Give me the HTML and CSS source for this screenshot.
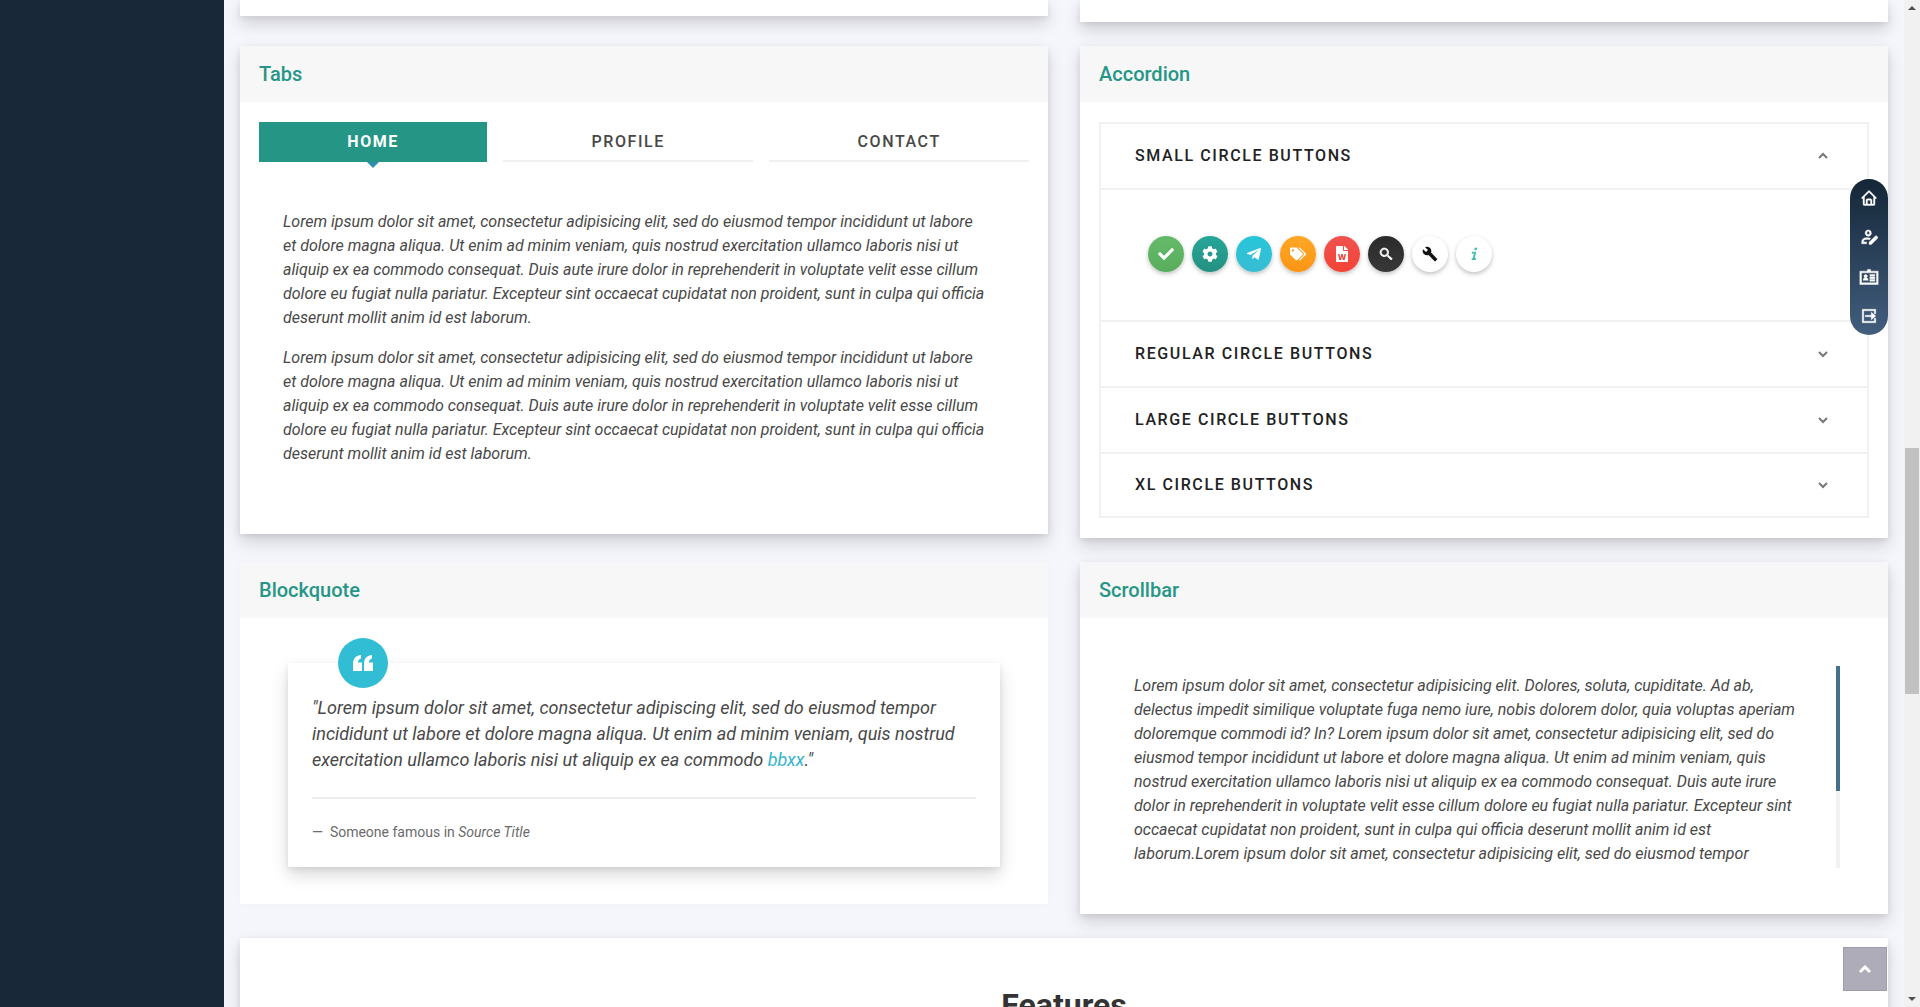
FILE: index.html
```html
<!DOCTYPE html>
<html lang="en">
<head>
<meta charset="utf-8">
<title>Components</title>
<link rel="stylesheet" href="styles.css">
</head>
<body>
<div class="app">
  <aside class="sidebar"></aside>
  <main class="content">
    <div class="row">
      <section class="card tail"></section>
      <section class="card tail tail-long"></section>
    </div>

    <div class="row">
      <section class="card">
        <h2 class="card-header">Tabs</h2>
        <div class="card-body tabs-body">
          <div class="tabs" role="tablist">
            <button class="tab active" role="tab" aria-selected="true">HOME</button>
            <button class="tab" role="tab" aria-selected="false">PROFILE</button>
            <button class="tab" role="tab" aria-selected="false">CONTACT</button>
          </div>
          <div class="tab-panel" role="tabpanel">
            <p>Lorem ipsum dolor sit amet, consectetur adipisicing elit, sed do eiusmod tempor incididunt ut labore et dolore magna aliqua. Ut enim ad minim veniam, quis nostrud exercitation ullamco laboris nisi ut aliquip ex ea commodo consequat. Duis aute irure dolor in reprehenderit in voluptate velit esse cillum dolore eu fugiat nulla pariatur. Excepteur sint occaecat cupidatat non proident, sunt in culpa qui officia deserunt mollit anim id est laborum.</p>
            <p>Lorem ipsum dolor sit amet, consectetur adipisicing elit, sed do eiusmod tempor incididunt ut labore et dolore magna aliqua. Ut enim ad minim veniam, quis nostrud exercitation ullamco laboris nisi ut aliquip ex ea commodo consequat. Duis aute irure dolor in reprehenderit in voluptate velit esse cillum dolore eu fugiat nulla pariatur. Excepteur sint occaecat cupidatat non proident, sunt in culpa qui officia deserunt mollit anim id est laborum.</p>
          </div>
        </div>
      </section>

      <section class="card">
        <h2 class="card-header">Accordion</h2>
        <div class="card-body">
          <div class="accordion">
            <button class="accordion-toggle" aria-expanded="true">SMALL CIRCLE BUTTONS
              <svg class="chevron" viewBox="0 0 12 8"><path d="M2 6l4-4 4 4"/></svg></button>
            <div class="accordion-panel">
              <button class="circle green" aria-label="Confirm"><svg viewBox="0 0 512 512"><path d="M173.898 439.404l-166.4-166.4c-9.997-9.997-9.997-26.206 0-36.204l36.203-36.204c9.997-9.998 26.207-9.998 36.204 0L192 312.69 432.095 72.596c9.997-9.997 26.207-9.997 36.204 0l36.203 36.204c9.997 9.997 9.997 26.206 0 36.204l-294.4 294.401c-9.998 9.997-26.207 9.997-36.204-.001z"/></svg></button>
              <button class="circle teal" aria-label="Settings"><svg viewBox="0 0 512 512"><path d="M487.4 315.7l-42.6-24.6c4.3-23.2 4.3-47 0-70.2l42.6-24.6c4.9-2.8 7.1-8.6 5.5-14-11.1-35.6-30-67.8-54.7-94.6-3.8-4.1-10-5.1-14.8-2.3L380.8 110c-17.9-15.4-38.5-27.3-60.8-35.1V25.8c0-5.6-3.9-10.5-9.4-11.7-36.7-8.2-74.3-7.8-109.2 0-5.5 1.2-9.4 6.1-9.4 11.7V75c-22.2 7.9-42.8 19.8-60.8 35.1L88.7 85.5c-4.9-2.8-11-1.9-14.8 2.3-24.7 26.7-43.6 58.9-54.7 94.6-1.7 5.4.6 11.2 5.5 14L67.3 221c-4.3 23.2-4.3 47 0 70.2l-42.6 24.6c-4.9 2.8-7.1 8.6-5.5 14 11.1 35.6 30 67.8 54.7 94.6 3.8 4.1 10 5.1 14.8 2.3l42.6-24.6c17.9 15.4 38.5 27.3 60.8 35.1v49.2c0 5.6 3.9 10.5 9.4 11.7 36.7 8.2 74.3 7.8 109.2 0 5.5-1.2 9.4-6.1 9.4-11.7v-49.2c22.2-7.9 42.8-19.8 60.8-35.1l42.6 24.6c4.9 2.8 11 1.9 14.8-2.3 24.7-26.7 43.6-58.9 54.7-94.6 1.5-5.5-.7-11.3-5.6-14.1zM256 336c-44.1 0-80-35.9-80-80s35.9-80 80-80 80 35.9 80 80-35.9 80-80 80z"/></svg></button>
              <button class="circle cyan" aria-label="Send"><svg viewBox="0 0 448 512"><path d="M446.7 98.6l-67.6 318.8c-5.1 22.5-18.4 28.1-37.3 17.5l-103-75.9-49.7 47.8c-5.5 5.5-10.1 10.1-20.7 10.1l7.4-104.9 190.9-172.5c8.3-7.4-1.8-11.5-12.9-4.1L117.8 284 16.2 252.2c-22.1-6.9-22.5-22.1 4.6-32.7L418.2 66.4c18.4-6.9 34.5 4.1 28.5 32.2z"/></svg></button>
              <button class="circle orange" aria-label="Tags"><svg viewBox="0 0 640 512"><path d="M497.941 225.941L286.059 14.059A48 48 0 0 0 252.118 0H48C21.49 0 0 21.49 0 48v204.118a48 48 0 0 0 14.059 33.941l211.882 211.882c18.744 18.745 49.136 18.746 67.882 0l204.118-204.118c18.745-18.745 18.745-49.137 0-67.882zM112 160c-26.51 0-48-21.49-48-48s21.49-48 48-48 48 21.49 48 48-21.49 48-48 48zm513.941 133.823L421.823 497.941c-18.745 18.745-49.137 18.745-67.882 0l-.36-.36L527.64 323.522c16.999-16.999 26.36-39.6 26.36-63.64s-9.362-46.641-26.36-63.64L331.397 0h48.721a48 48 0 0 1 33.941 14.059l211.882 211.882c18.745 18.745 18.745 49.137 0 67.882z"/></svg></button>
              <button class="circle red" aria-label="Document"><svg viewBox="0 0 384 512"><path d="M224 136V0H24C10.7 0 0 10.7 0 24v464c0 13.3 10.7 24 24 24h336c13.3 0 24-10.7 24-24V160H248c-13.2 0-24-10.8-24-24zm57.1 120H305c7.7 0 13.4 7.1 11.7 14.7l-38 168c-1.2 5.5-6.1 9.3-11.7 9.3h-38c-5.5 0-10.3-3.8-11.6-9.1-25.8-103.5-20.8-81.2-25.6-110.5h-.5c-1.1 14.3-2.4 17.4-25.6 110.5-1.3 5.3-6.1 9.1-11.6 9.1H117c-5.6 0-10.5-3.9-11.7-9.4l-37.8-168c-1.7-7.5 4-14.6 11.7-14.6h24.5c5.7 0 10.7 4 11.8 9.7 15.6 78 20.1 109.5 21 122.2 1.6-10.2 7.3-32.7 29.4-122.7 1.3-5.4 6.1-9.1 11.7-9.1h29.1c5.6 0 10.4 3.8 11.7 9.2 24 100.4 28.8 124 29.6 129.4-.2-11.2-2.6-17.8 21.6-129.2 1-5.6 5.9-9.5 11.5-9.5zM384 121.9v6.1H256V0h6.1c6.4 0 12.5 2.5 17 7l97.9 98c4.5 4.5 7 10.6 7 16.9z"/></svg></button>
              <button class="circle black" aria-label="Search"><svg viewBox="0 0 24 24"><path d="M15.5 14h-.8l-.3-.3A6.5 6.5 0 1 0 13.700 14.400l.3.3v.8l5.600 5.500 1.900-1.900zM9.500 14a4.500 4.500 0 1 1 0-9 4.500 4.500 0 0 1 0 9z" stroke="currentColor" stroke-width="1"/></svg></button>
              <button class="circle white" aria-label="Tools"><svg viewBox="0 0 24 24"><path d="M22.700 19l-9.100-9.100c.9-2.300.4-5-1.500-6.900-2-2-5-2.400-7.400-1.300L9 6 6 9 1.600 4.700C.4 7.100.9 10.100 2.900 12.100c1.900 1.900 4.600 2.400 6.900 1.500l9.100 9.100c.4.4 1 .4 1.400 0l2.300-2.300c.5-.4.5-1.100.1-1.400z"/></svg></button>
              <button class="circle white mint" aria-label="Info"><svg viewBox="0 0 14 14"><path d="M7.700 1.500h2.200l-.4 2H7.300zM5.200 5h3.700L7.700 10.700h1.200l-.3 1.500H4.800l.3-1.500h.9l.8-4.200h-1.900z"/></svg></button>
            </div>
            <button class="accordion-toggle" aria-expanded="false">REGULAR CIRCLE BUTTONS
              <svg class="chevron" viewBox="0 0 12 8"><path d="M2 2l4 4 4-4"/></svg></button>
            <button class="accordion-toggle" aria-expanded="false">LARGE CIRCLE BUTTONS
              <svg class="chevron" viewBox="0 0 12 8"><path d="M2 2l4 4 4-4"/></svg></button>
            <button class="accordion-toggle" aria-expanded="false">XL CIRCLE BUTTONS
              <svg class="chevron" viewBox="0 0 12 8"><path d="M2 2l4 4 4-4"/></svg></button>
          </div>
        </div>
      </section>
    </div>

    <div class="row">
      <section class="card flat">
        <h2 class="card-header">Blockquote</h2>
        <div class="quote-body">
          <blockquote class="quote">
            <span class="quote-mark"><svg viewBox="0 0 24 24"><path d="M2 20v-7C2 8 4.500 4.500 10 4v3.500C8 8 7 9.500 7 11.500h4V20zM13 20v-7c0-5 2.500-8.500 8-9v3.500c-2 .5-3 2-3 4h4V20z"/></svg></span>
            <p>"Lorem ipsum dolor sit amet, consectetur adipiscing elit, sed do eiusmod tempor incididunt ut labore et dolore magna aliqua. Ut enim ad minim veniam, quis nostrud exercitation ullamco laboris nisi ut aliquip ex ea commodo <a href="#">bbxx</a>."</p>
            <footer>—&nbsp; Someone famous in <cite>Source Title</cite></footer>
          </blockquote>
        </div>
      </section>

      <section class="card">
        <h2 class="card-header">Scrollbar</h2>
        <div class="scroll-body">
          <div class="scroll-area">
            <p>Lorem ipsum dolor sit amet, consectetur adipisicing elit. Dolores, soluta, cupiditate. Ad ab, delectus impedit similique voluptate fuga nemo iure, nobis dolorem dolor, quia voluptas aperiam doloremque commodi id? In? Lorem ipsum dolor sit amet, consectetur adipisicing elit, sed do eiusmod tempor incididunt ut labore et dolore magna aliqua. Ut enim ad minim veniam, quis nostrud exercitation ullamco laboris nisi ut aliquip ex ea commodo consequat. Duis aute irure dolor in reprehenderit in voluptate velit esse cillum dolore eu fugiat nulla pariatur. Excepteur sint occaecat cupidatat non proident, sunt in culpa qui officia deserunt mollit anim id est laborum.Lorem ipsum dolor sit amet, consectetur adipisicing elit, sed do eiusmod tempor</p>
            <div class="scroll-track"><div class="scroll-thumb"></div></div>
          </div>
        </div>
      </section>
    </div>

    <section class="card features">
      <h1>Features</h1>
    </section>
  </main>

  <div class="page-scroll">
    <svg viewBox="0 0 16 16"><path d="M4 10l4-4 4 4z"/></svg>
    <div class="page-rail"><div class="page-thumb"></div></div>
    <svg viewBox="0 0 16 16"><path d="M4 6l4 4 4-4z"/></svg>
  </div>
</div>

<nav class="quick-nav">
  <a href="#" aria-label="Home"><svg viewBox="0 0 24 24"><path d="M12.700 2.300a1 1 0 0 0-1.400 0l-9 9a1 1 0 0 0 1.400 1.400l.3-.3V20a2 2 0 0 0 2 2h12a2 2 0 0 0 2-2v-7.600l.3.3a1 1 0 0 0 1.400-1.400zM10 20v-5h4v5zm8 0h-2v-5a2 2 0 0 0-2-2h-4a2 2 0 0 0-2 2v5H6v-9.600l6-6 6 6z"/></svg></a>
  <a href="#" aria-label="Edit profile"><svg viewBox="0 0 24 24"><path d="M11 11c2.500 0 4.200-1.800 4.200-4.300S13.500 2.500 11 2.500 6.800 4.200 6.800 6.700 8.500 11 11 11zm0-6.200c1.200 0 1.900.8 1.900 1.900S12.200 8.700 11 8.700s-1.900-.9-1.900-2S9.800 4.800 11 4.800zM4.500 18.500c0-2 1.300-3.300 3.300-3.300h3.400c.5 0 1 .1 1.400.3l1.600-1.600a6 6 0 0 0-3-.9H7.800c-3.200 0-5.600 2.300-5.600 5.500V21h6.600v-2.500zM20.600 10.600l-8.600 8.400V22h3.100l8.500-8.500c.5-.5.5-1 0-1.500l-1.400-1.400c-.5-.5-1.100-.5-1.600 0z"/></svg></a>
  <a href="#" aria-label="Contact card"><svg class="wide" viewBox="0 0 24 20"><path d="M1 3h9V1h4v2h9v16H1zM3 5v12h18V5zM5 14c0-2 1-3 3-3s3 1 3 3zM13 7h6v2h-6zM13 10h6v2h-6zM13 13h6v2h-6z"/><circle cx="8" cy="9" r="2"/></svg></a>
  <a href="#" aria-label="Exit"><svg viewBox="0 0 24 24"><path d="M3 3h18v6h-2V5H5v14h14v-4h2v6H3zM7 11h8V7l6 5-6 5v-4H7z"/></svg></a>
</nav>
<button class="to-top" aria-label="Back to top"><svg viewBox="0 0 14 9"><path d="M2 7l5-5 5 5"/></svg></button>
</body>
</html>
```
FILE: styles.css
```css
* { box-sizing: border-box; }

body {
  margin: 0;
  height: 100vh;
  overflow: hidden;
  background: #f5f5fc;
  color: #484848;
  font: 16px/24px Roboto, sans-serif;
}

h1, h2, p, blockquote { margin: 0; }

button {
  border: 0;
  padding: 0;
  background: none;
  color: inherit;
  font: inherit;
}

svg { fill: currentColor; }

.app { display: flex; height: 100vh; }

.sidebar { flex: 0 0 224px; background: #182838; }

.content {
  flex: 1;
  min-width: 0;
  padding: 0 16px;
  overflow: hidden;
  display: flex;
  flex-direction: column;
  gap: 24px;
}

.row {
  display: grid;
  grid-template-columns: 1fr 1fr;
  gap: 32px;
  align-items: start;
}

.card {
  background: #fff;
  box-shadow: 0 8px 16px rgba(0, 0, 0, .15), 0 2px 6px rgba(0, 0, 0, .08);
}

.flat { box-shadow: 0 0 12px rgba(0, 0, 0, .02); }

.tail { height: 16px; }
.tail-long { height: 22px; }

.card-header {
  padding: 16px 19px;
  background: #f7f7f7;
  color: #259686;
  font-size: 20px;
  line-height: 24px;
  font-weight: 500;
}

.card-body { padding: 20px 19px; }

.tabs-body { padding-bottom: 68px; }

.tabs { display: flex; gap: 16px; }

.tab {
  position: relative;
  flex: 1 1 auto;
  height: 40px;
  box-shadow: inset 0 -2px #f0f0f0;
  font-weight: 500;
  letter-spacing: .1em;
}

.tab.active {
  box-shadow: none;
  background: #259686;
  color: #fff;
  font-weight: 700;
}

.tab.active::after {
  content: "";
  position: absolute;
  top: 40px;
  left: 50%;
  margin-left: -6px;
  border: 6px solid transparent;
  border-top-color: #2e8fb0;
  border-bottom: 0;
}

.tab-panel {
  display: flex;
  flex-direction: column;
  gap: 16px;
  padding: 48px 40px 0 24px;
  font-style: italic;
}

.accordion {
  border: solid #f1f1f1;
  border-width: 0 2px 2px;
}

.accordion-toggle {
  display: flex;
  align-items: center;
  justify-content: space-between;
  width: 100%;
  height: 66px;
  padding: 0 38px 0 34px;
  border-top: 2px solid #f1f1f1;
  color: #222;
  font-weight: 500;
  letter-spacing: .1em;
}

.accordion-toggle:last-child { height: 64px; }

.chevron {
  width: 12px;
  height: 8px;
  fill: none;
  stroke: #777;
  stroke-width: 2;
}

.accordion-panel {
  display: flex;
  gap: 8px;
  padding: 46px 47px;
  border-top: 2px solid #f1f1f1;
}

.circle {
  display: flex;
  align-items: center;
  justify-content: center;
  width: 36px;
  height: 36px;
  margin-bottom: 2px;
  border-radius: 50%;
  box-shadow: 0 2px 4px rgba(0, 0, 0, .25);
  color: #fff;
}

.circle svg { width: 16px; height: 16px; }

.green { background: linear-gradient(#66bb6a, #57ad5b); }
.teal { background: linear-gradient(#26a69a, #259080); }
.cyan { background: linear-gradient(#26c6da, #38bcd2); }
.orange { background: linear-gradient(#ffa726, #fb9514); }
.red { background: linear-gradient(#ef5350, #f44336); }
.black { background: linear-gradient(#2b2b2b, #383838); }
.white { background: #fff; color: #111; }
.mint { color: #3fbfae; }

.quote-body { padding: 45px 48px 37px; }

.quote {
  position: relative;
  padding: 32px 24px 23px;
  background: #fff;
  box-shadow: 0 8px 16px rgba(0, 0, 0, .15), 0 2px 6px rgba(0, 0, 0, .08);
}

.quote-mark {
  position: absolute;
  top: -25px;
  left: 50px;
  display: flex;
  align-items: center;
  justify-content: center;
  width: 50px;
  height: 50px;
  border-radius: 50%;
  background: #31bdd3;
  color: #fff;
}

.quote-mark svg { width: 26px; height: 24px; }

.quote p {
  padding-bottom: 24px;
  border-bottom: 2px solid #eee;
  font-size: 18px;
  line-height: 26px;
  font-style: italic;
}

.quote a { color: #33b5cb; text-decoration: none; }

.quote footer {
  padding-top: 21px;
  color: #6b6b6b;
  font-size: 14px;
  line-height: 24px;
}

.scroll-body { padding: 48px 48px 46px 54px; }

.scroll-area {
  display: flex;
  gap: 24px;
  height: 202px;
  overflow: hidden;
}

.scroll-area p { flex: 1; padding-top: 8px; font-style: italic; }

.scroll-track { width: 4px; background: #f1f1f1; }

.scroll-thumb { height: 62%; background: #44708a; }

.features {
  flex: 1 0 auto;
  padding: 48px 24px;
  text-align: center;
}

.features h1 {
  color: #333;
  font-size: 32px;
  line-height: 38px;
  font-weight: 700;
}

.page-scroll {
  flex: 0 0 16px;
  display: flex;
  flex-direction: column;
  background: #f1f1f1;
  color: #505050;
}

.page-scroll svg { width: 16px; height: 16px; }

.page-rail {
  flex: 1;
  display: flex;
  flex-direction: column;
  padding: 0 1px;
}

.page-rail::before { content: ""; flex: 432; }
.page-thumb { flex: 246; background: #c1c1c1; }
.page-rail::after { content: ""; flex: 297; }

.quick-nav {
  position: fixed;
  top: 179px;
  right: 32px;
  display: flex;
  flex-direction: column;
  align-items: center;
  justify-content: space-between;
  width: 38px;
  height: 156px;
  padding: 10px 0;
  border-radius: 19px;
  background: linear-gradient(#142637, #425e7e);
}

.quick-nav a { display: flex; color: #fff; }

.quick-nav svg {
  width: 18px;
  height: 18px;
  stroke: currentColor;
  stroke-width: .5;
}

.quick-nav .wide { width: 20px; }

.quick-nav path { fill-rule: evenodd; }

.to-top {
  position: fixed;
  right: 33px;
  bottom: 16px;
  display: flex;
  align-items: center;
  justify-content: center;
  width: 44px;
  height: 44px;
  border: 1px solid #a19eac;
  background: #aeacb9;
}

.to-top svg {
  width: 14px;
  height: 9px;
  fill: none;
  stroke: #fff;
  stroke-width: 3;
}
```
